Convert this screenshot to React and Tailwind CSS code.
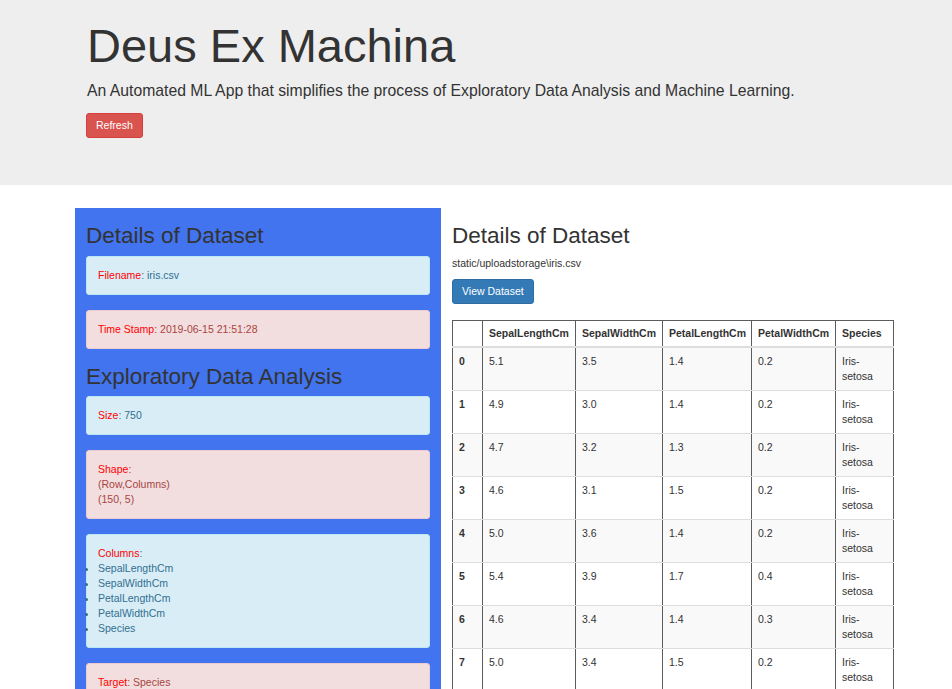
import React from 'react';

const rows = [
  ['0', '5.1', '3.5', '1.4', '0.2'],
  ['1', '4.9', '3.0', '1.4', '0.2'],
  ['2', '4.7', '3.2', '1.3', '0.2'],
  ['3', '4.6', '3.1', '1.5', '0.2'],
  ['4', '5.0', '3.6', '1.4', '0.2'],
  ['5', '5.4', '3.9', '1.7', '0.4'],
  ['6', '4.6', '3.4', '1.4', '0.3'],
  ['7', '5.0', '3.4', '1.5', '0.2'],
  ['8', '4.4', '2.9', '1.4', '0.2'],
  ['9', '4.9', '3.1', '1.5', '0.1'],
];

const columns = ['SepalLengthCm', 'SepalWidthCm', 'PetalLengthCm', 'PetalWidthCm', 'Species'];

// Bootstrap-ish alert boxes (info = blue, danger = pink)
const Alert = ({ kind = 'info', children }) => {
  const cls =
    kind === 'info'
      ? 'bg-[#d9edf7] border-[#bce8f1] text-[#31708f]'
      : 'bg-[#f2dede] border-[#ebccd1] text-[#a94442]';
  return <div className={`${cls} border rounded-[3px] p-[11px] mb-[15px]`}>{children}</div>;
};

const Label = ({ children }) => <span className="text-[#ff0000]">{children}</span>;

export default function App() {
  const cell = 'border-x border-x-[#5c5c5c] border-y border-y-[#dddddd] px-[6px] align-top';

  return (
    <div
      className="h-[689px] overflow-hidden bg-white text-[#333] text-[10.5px] leading-[15px]"
      style={{ fontFamily: '"Liberation Sans", Arial, sans-serif' }}
    >
      <div className="bg-[#eeeeee] h-[185px] mb-[23px] pl-[87px] pt-[20px]">
        <h1 className="text-[47px] leading-[1.1] font-normal">Deus Ex Machina</h1>
        <p className="text-[15.75px] leading-[22.5px] mt-[8px] mb-[11px]">
          An Automated ML App that simplifies the process of Exploratory Data Analysis and Machine Learning.
        </p>
        <button className="-ml-px bg-[#d9534f] border border-[#d43f3a] text-white rounded-[3px] px-[9px] py-[4px] leading-[15px]">
          Refresh
        </button>
      </div>

      <div className="flex pl-[75px]">
        <div className="w-[366px] bg-[#4174ee] px-[11px] shrink-0">
          <h2 className="text-[22.5px] leading-[1.1] mt-[16px] mb-[7px]">Details of Dataset</h2>
          <Alert kind="info">
            <Label>Filename</Label>: iris.csv
          </Alert>
          <Alert kind="danger">
            <Label>Time Stamp</Label>: 2019-06-15 21:51:28
          </Alert>
          <h2 className="text-[22.5px] leading-[1.1] mt-[16px] mb-[6px]">Exploratory Data Analysis</h2>
          <Alert kind="info">
            <Label>Size</Label>: 750
          </Alert>
          <Alert kind="danger">
            <Label>Shape</Label>:
            <br />
            (Row,Columns)
            <br />
            (150, 5)
          </Alert>
          <Alert kind="info">
            <Label>Columns</Label>:
            <ul className="list-disc list-outside pl-0">
              {columns.map((c) => (
                <li key={c}>{c}</li>
              ))}
            </ul>
          </Alert>
          <Alert kind="danger">
            <Label>Target</Label>: Species
            <br />
            <br />
          </Alert>
        </div>

        <div className="w-[464px] px-[11px] shrink-0">
          <h2 className="text-[22.5px] leading-[1.1] mt-[16px] mb-[7px]">Details of Dataset</h2>
          <p className="mb-[8px]">{'static/uploadstorage\\iris.csv'}</p>
          <button className="bg-[#337ab7] border border-[#2e6da4] text-white rounded-[3px] px-[9px] py-[4px] leading-[15px]">
            View Dataset
          </button>

          <table className="mt-[16px] w-[441px] table-fixed border-collapse border border-[#5c5c5c]">
            <colgroup>
              <col className="w-[30px]" />
              <col className="w-[93px]" />
              <col className="w-[87px]" />
              <col className="w-[89px]" />
              <col className="w-[84px]" />
              <col className="w-[58px]" />
            </colgroup>
            <thead>
              <tr>
                <th className="border-x border-x-[#5c5c5c] border-t border-t-[#5c5c5c] border-b-2 border-b-[#dddddd] px-[6px] py-[5px] text-left align-bottom" />
                {columns.map((c) => (
                  <th
                    key={c}
                    className="border-x border-x-[#5c5c5c] border-t border-t-[#5c5c5c] border-b-2 border-b-[#dddddd] px-[6px] py-[5px] text-left align-bottom font-bold"
                  >
                    {c}
                  </th>
                ))}
              </tr>
            </thead>
            <tbody>
              {rows.map((r, i) => (
                <tr key={r[0]} className={i % 2 === 0 ? 'bg-[#f9f9f9]' : 'bg-white'}>
                  <th className={`${cell} py-[6px] text-left font-bold`}>{r[0]}</th>
                  <td className={`${cell} py-[6px]`}>{r[1]}</td>
                  <td className={`${cell} py-[6px]`}>{r[2]}</td>
                  <td className={`${cell} py-[6px]`}>{r[3]}</td>
                  <td className={`${cell} py-[6px]`}>{r[4]}</td>
                  <td className={`${cell} py-[6px]`}>Iris-setosa</td>
                </tr>
              ))}
            </tbody>
          </table>
        </div>
      </div>
    </div>
  );
}
